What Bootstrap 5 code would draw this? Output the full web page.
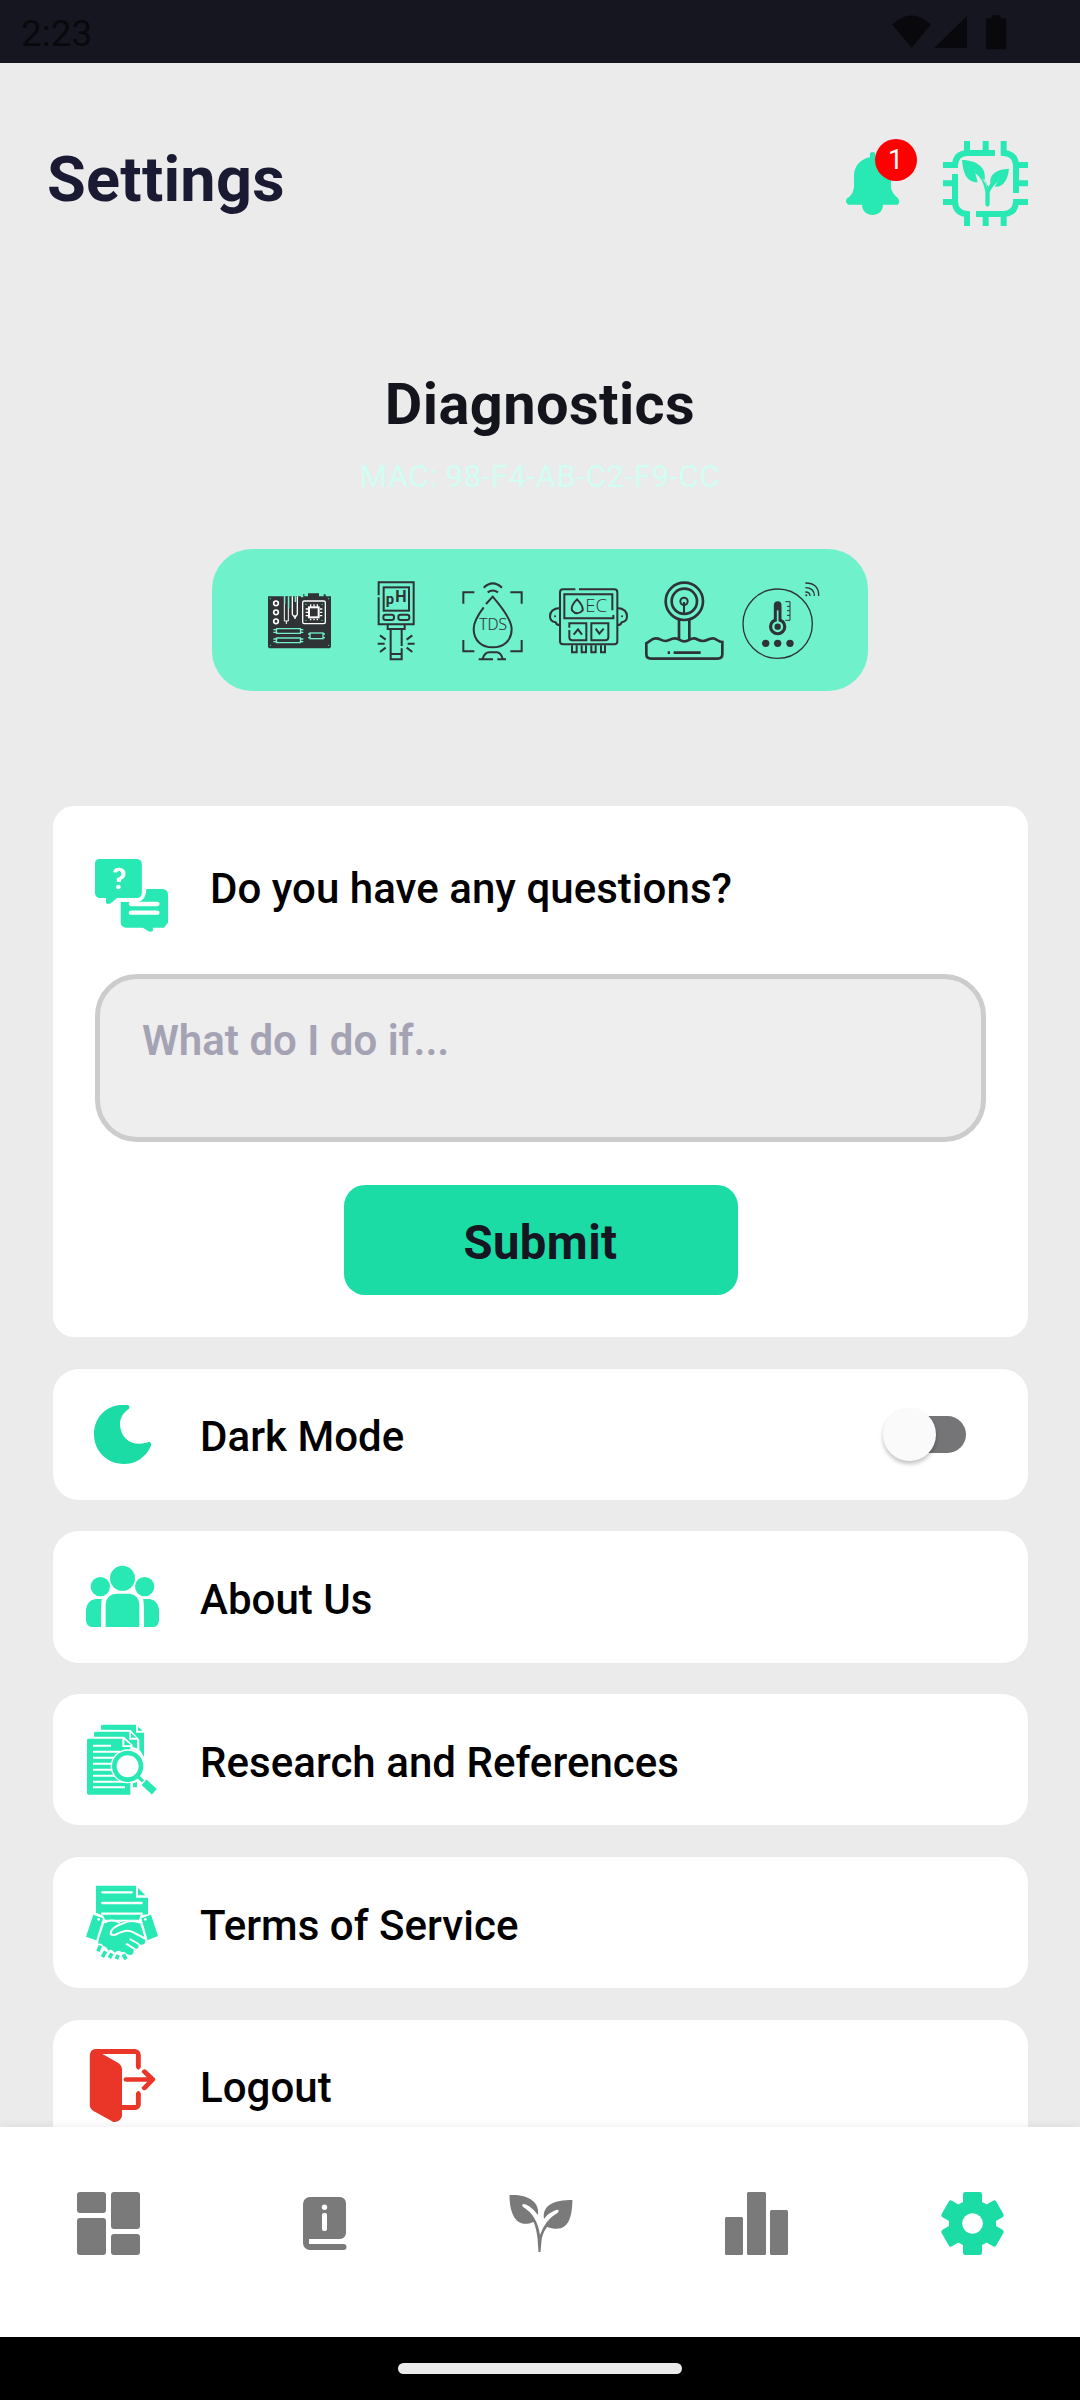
<!DOCTYPE html>
<html lang="en">
<head>
<meta charset="utf-8">
<meta name="viewport" content="width=device-width, initial-scale=1">
<title>Settings</title>
<link href="https://cdn.jsdelivr.net/npm/bootstrap@5.3.0/dist/css/bootstrap.min.css" rel="stylesheet">
<style>
  body { font-family: Roboto, sans-serif; background: #ebebeb; color: #000; height: 2400px; overflow: hidden; }
  svg { display: block; flex: none; overflow: visible; }
  .status-bar { height: 63px; background: #161620; color: #09090d; font-size: 37px; line-height: 1; padding: 3px 73px 0 21px; }
  .screen-body { flex: 1 1 0; min-height: 0; }
  .top-row { height: 85px; margin-top: 78px; padding: 0 52px 0 47px; }
  .page-title { font-size: 63px; line-height: 1; font-weight: 700; letter-spacing: .25px; color: #1a1b33; margin: 0; padding-bottom: 8px; }
  .mint { color: #28e9b4; }
  .emerald { color: #1bdca5; }
  .bell-wrap { margin-right: 44px; }
  .count-badge { left: 29px; top: -13px; width: 42px; height: 42px; background: #f00; font-size: 27px; font-weight: 400; }
  .diag-title { font-size: 57.75px; line-height: 60px; font-weight: 700; letter-spacing: .4px; color: #14151c; margin: 148px 0 22px; }
  .mac-line { font-size: 31.5px; line-height: 40px; letter-spacing: .36px; color: #d1fdf2; padding-top: 1px; margin-bottom: 52px; }
  .sensor-panel { width: 656px; height: 142px; border-radius: 40px; background: #6ff1cc; gap: 17.3px; color: #2f3335; padding-left: 1px; }
  .tile { background: #fff; border: 0; border-radius: 26px; }
  .stack { padding: 115px 52px 0 53px; gap: 31.6px; }
  .ask-tile { height: 531px; padding: 53px 42px 42px; border-radius: 21px; }
  .label { font-size: 42px; line-height: 1; font-weight: 500; letter-spacing: .04px; }
  .ask-label { padding: 0 0 14px 42px; }
  .ask-input { height: 168px; margin: 42px 0 43px; border: 5px solid #ccc; border-radius: 42px; background: #eee; color: #a5a3b3; font-size: 42px; line-height: 48px; font-weight: 600; padding: 38px 42px; resize: none; }
  .ask-input::placeholder { color: #a5a3b3; }
  .btn-submit { width: 394px; height: 110px; border: 0; border-radius: 21px; background: #1bdca5; color: #151622; font-size: 47.25px; font-weight: 700; letter-spacing: .4px; line-height: 1; padding: 7px 0 0; }
  .setting-row { height: 131.2px; padding: 0 62px 0 33px; gap: 41px; }
  .setting-row .label { padding-top: 6px; }
  .toggle-track { width: 73px; height: 37px; border-radius: 19px; background: #757577; }
  .toggle-thumb { left: -10px; top: -8px; width: 53px; height: 53px; border-radius: 50%; background: #fafafa; box-shadow: 0 3px 4px rgba(0,0,0,.24); }
  .tab-bar { height: 210px; background: #fff; color: #7a7a7a; box-shadow: 0 -1px 10px rgba(0,0,0,.07); padding-top: 65px; z-index: 2; }
  .tab-bar .nav-link { color: inherit; padding: 0; }
  .tab-bar .nav-link.active { color: #1bdca5; }
  .gesture-bar { height: 63px; background: #000; padding-top: 26px; z-index: 3; }
  .gesture-pill { width: 284px; height: 11px; border-radius: 6px; background: #ebebeb; }
</style>
</head>
<body class="d-flex flex-column">

<div class="status-bar d-flex align-items-center justify-content-between flex-shrink-0">
  <span>2:23</span>
  <svg width="115" height="35" viewBox="216 44 345 105" fill="#09090d">
    <path d="M216 69Q275 16 333 69L275 140z"/><path d="M441 43V140H343z"/>
    <path d="M515 42h26v9h12q6 0 6 6v81q0 6-6 6h-49q-6 0-6-6V57q0-6 6-6h11z"/>
  </svg>
</div>

<main class="screen-body overflow-hidden d-flex flex-column">
  <header class="top-row d-flex align-items-center justify-content-between flex-shrink-0">
    <h1 class="page-title">Settings</h1>
    <div class="d-flex align-items-center">
      <div class="bell-wrap position-relative mint">
        <svg width="53.3" height="63.3" viewBox="78 456 160 190" fill="currentColor">
          <path d="M150 472V463q0-7 8-7t8 7v9c30 5 47 27 47 55v37c3 12 10 22 20 29q10 13 0 21H189c0 41-62 41-63 0H85q-12-7-4-19c13-7 19-19 21-34V526c0-26 20-50 48-54z"/>
        </svg>
        <span class="count-badge position-absolute rounded-circle d-flex align-items-center justify-content-center text-white">1</span>
      </div>
      <svg class="mint" width="85" height="85" viewBox="369 423 255 255" fill="none" stroke="currentColor" stroke-width="18">
        <path d="M525 459H441Q407 461 405 495H369M441 423V459M497 423V459M551 423V459Q586 461 588 495V579M588 495H624M588 550H624M624 606H588Q586 640 551 642H468M551 642V678M497 642V678M441 678V642Q407 640 405 606H369M405 606V522M369 550H405"/>
        <g fill="currentColor" stroke="none">
          <path d="M426 480C462 481 501 496 494 541C506 561 499 575 505 566C515 553 526 546 537 537L524 560C548 563 564 540 567 506C526 508 508 524 511 551L505 560L496 542L466 520L473 547C438 547 429 516 426 480z"/>
          <path d="M466 519Q491 537 496 577V614Q502 626 509 614V578Q515 561 537 541L534 535Q510 551 503 568Q494 533 466 519z"/>
        </g>
      </svg>
    </div>
  </header>

  <section class="text-center flex-shrink-0">
    <h2 class="diag-title">Diagnostics</h2>
    <div class="mac-line">MAC: 98-F4-AB-C2-F9-CC</div>
    <div class="sensor-panel mx-auto d-flex align-items-center justify-content-center">
      <!-- circuit board -->
      <svg width="79" height="79" viewBox="180 122 237 237">
        <path fill="currentColor" d="M204 168H303V171H310V161H313V168H324V159H357V168H371V162H377V168H393V320L389 324H208L204 320z"/>
        <g fill="none" stroke="#fff" stroke-width="5"><circle cx="228" cy="189" r="7"/><circle cx="228" cy="216" r="7"/><circle cx="228" cy="243" r="7"/>
          <path d="M253 168V242H265V170M259 242V251" stroke-width="3"/><path d="M277 168V222L285 232L292 222V168M285 225V236" stroke-width="4"/>
          <rect x="308" y="182" width="68" height="68" rx="5" stroke-width="4"/><rect x="327" y="201" width="29" height="30" stroke-width="6"/>
          <path d="M332 192V240M342 192V240M352 192V240M317 206H367M317 216H367M317 226H367" stroke-width="4" stroke-dasharray="7 36"/></g>
        <g fill="none" stroke="#72efcb" stroke-width="4"><path d="M254 168V190M266 168V205M286 168V185" /><path d="M220 268H230V265H301V268H310M220 276H230V279H301V276H310M220 296H230V293H301V296H310M220 304H230V307H301V304H310M229 265V279M302 265V279M229 293V307M302 293V307"/><rect x="330" y="278" width="39" height="17"/><path d="M324 281H330M324 292H330M369 281H375M369 292H375"/></g>
        <g fill="#28e9b4"><circle cx="211" cy="175" r="2"/><circle cx="386" cy="175" r="2"/><circle cx="211" cy="315" r="2"/><circle cx="386" cy="315" r="2"/><circle cx="318" cy="192" r="2"/><circle cx="366" cy="192" r="2"/><circle cx="318" cy="240" r="2"/><circle cx="366" cy="240" r="2"/></g>
      </svg>
      <!-- pH probe -->
      <svg width="79" height="79" viewBox="469 122 237 237" fill="none" stroke="currentColor" stroke-width="6">
        <path d="M534 165V126H639V252H534V171"/><rect x="549" y="141" width="76" height="70"/>
        <rect x="548" y="223" width="32" height="16" rx="7"/><rect x="593" y="223" width="33" height="16" rx="7"/>
        <path d="M561 254V266H612V254M570 268V357H603V324M603 317V268M570 341H603M531 310H552M538 285L555 298M538 335L555 322M642 310H621M635 285L618 298M635 335L618 322"/>
        <g fill="currentColor" stroke="none" font-family="Roboto, sans-serif" font-weight="700"><text x="555" y="191" font-size="45" textLength="25" lengthAdjust="spacingAndGlyphs">p</text><text x="584" y="186" font-size="49" textLength="34" lengthAdjust="spacingAndGlyphs">H</text></g>
      </svg>
      <!-- TDS meter -->
      <svg width="79" height="79" viewBox="758 122 237 237" fill="none" stroke="currentColor" stroke-width="6">
        <path d="M789 190V156H822M930 156H964V190M964 299V333H930M822 333H789V299M850 142Q877 116 905 142M862 156Q877 145 893 156"/>
        <path d="M857 191L877 169Q934 235 934 266C934 302 908 321 877 321S820 302 820 266C820 245 834 222 850 201"/>
        <path d="M835 357H878M891 357H917M847 355Q853 336 867 336H889Q902 337 907 355"/>
        <text x="837" y="268" font-family="'Open Sans', sans-serif" font-weight="300" font-size="47" textLength="83" lengthAdjust="spacingAndGlyphs" fill="currentColor" stroke-width=".6">TDS</text>
      </svg>
      <!-- EC controller -->
      <svg width="79" height="79" viewBox="27 122 237 237" fill="none" stroke="currentColor" stroke-width="6">
        <path d="M106 147H69Q60 147 60 156V303Q60 312 69 312H223Q232 312 232 303V156Q232 147 223 147H117M60 203Q30 205 30 228Q30 244 47 246Q50 255 60 254M232 203Q261 205 261 228Q261 244 245 246Q242 255 232 254"/>
        <path d="M217 210V162H73V234H220V224"/><path d="M111 177Q91 197 96 210Q111 228 128 210Q130 196 111 177z"/>
        <path d="M88 262V249H139V300H97Q88 300 88 291V269M205 249V291Q205 300 196 300H154V249zM101 283L114 267L126 283M167 265L178 280L191 265M96 315V336H110V315M125 315V336H138V315M154 315V336H167V315M183 315V336H195V315"/>
        <g fill="currentColor" stroke="none"><circle cx="45" cy="228" r="3"/><circle cx="246" cy="228" r="3"/><text x="136" y="215" font-family="'Open Sans', sans-serif" font-weight="300" font-size="56" textLength="65" lengthAdjust="spacingAndGlyphs">EC</text></g>
      </svg>
      <!-- water level -->
      <svg width="79" height="79" viewBox="316 122 237 237" fill="none" stroke="currentColor" stroke-width="8">
        <circle cx="434" cy="183" r="56"/><circle cx="434" cy="183" r="38"/><circle cx="433" cy="183" r="11" stroke-width="6"/><path d="M433 185V220" stroke-width="6"/>
        <path d="M418 238V298M449 238V298M320 309V342Q320 355 334 355H534Q548 355 548 342V305C535 305 530 294 520 294C504 294 504 302 490 302C475 302 473 294 463 294C449 294 448 303 434 303C420 303 420 294 405 294C391 294 391 302 378 302C363 302 363 294 348 294C335 294 331 304 320 309z"/>
        <path d="M402 337H483M384 337H391"/>
      </svg>
      <!-- temperature -->
      <svg width="79" height="79" viewBox="605 122 237 237" fill="none" stroke="currentColor" stroke-width="4">
        <circle cx="712" cy="250" r="104"/><path d="M735 184H749V240H735M740 198H749M740 211H749M740 225H749" stroke-width="3"/>
        <path d="M712 194V244" stroke-width="23" stroke-linecap="round"/><circle cx="712" cy="259" r="26" fill="currentColor" stroke="none"/>
        <path d="M712 210V246" stroke="#6ff1cc" stroke-width="5"/><circle cx="712" cy="259" r="13" stroke="#6ff1cc" stroke-width="7"/>
        <g fill="currentColor" stroke="none"><circle cx="676" cy="309" r="11"/><circle cx="712" cy="309" r="11"/><circle cx="749" cy="309" r="11"/><circle cx="798" cy="165" r="3"/></g>
        <path d="M795 128Q836 128 835 167M795 142Q822 142 822 167M795 155Q809 155 809 167"/>
      </svg>
    </div>
  </section>

  <section class="stack d-flex flex-column">
    <form class="tile ask-tile card flex-shrink-0">
      <div class="d-flex align-items-center">
        <svg class="mint" width="73" height="73" viewBox="120 207 159 219" preserveAspectRatio="none" fill="currentColor">
          <path d="M129 207H213Q222 210 222 222V309Q221 322 213 324H168L153 341Q145 343 144 338V324H129Q120 321 120 309V220Q120 209 129 207z"/>
          <path d="M232 297H268Q279 300 279 314V398L270 413H246V423Q240 428 235 422L224 413H186Q176 409 176 398V336H213Q231 332 232 297z"/>
          <path d="M222 342H254M200 342H240M200 368H254" stroke="#fff" stroke-width="13" stroke-linecap="round"/>
          <path d="M164 247Q165 238 173 238Q182 240 182 251Q182 262 172 267V276" fill="none" stroke="#fff" stroke-width="9"/><ellipse cx="171" cy="291" rx="5" ry="7" fill="#fff"/>
        </svg>
        <label class="label ask-label" for="question">Do you have any questions?</label>
      </div>
      <textarea id="question" class="ask-input w-100 d-block overflow-hidden" placeholder="What do I do if..."></textarea>
      <button type="button" class="btn btn-submit mx-auto">Submit</button>
    </form>

    <div class="tile setting-row d-flex align-items-center flex-shrink-0">
      <svg class="emerald" width="73" height="73" viewBox="138 144 219 219" fill="currentColor"><path d="M239 165H263Q271 168 267 176C247 190 239 206 240 227C244 268 279 292 326 276Q335 275 333 287C317 323 286 342 251 342C202 342 162 304 162 253C162 205 195 170 239 165z"/></svg>
      <span class="label">Dark Mode</span>
      <div class="toggle-track position-relative ms-auto"><div class="toggle-thumb position-absolute"></div></div>
    </div>

    <div class="tile setting-row d-flex align-items-center flex-shrink-0">
      <svg class="mint" width="73" height="73" viewBox="138 630 219 219" fill="currentColor">
        <circle cx="247.500" cy="685" r="37.500"/><circle cx="181" cy="710" r="29"/><circle cx="314" cy="710" r="29"/>
        <path d="M197 831V762Q200 732 230 731H268Q295 734 298 762V831zM167 747H186Q182 755 183 831H155Q140 829 138 812V778Q142 750 167 747zM328 747H309Q313 755 312 831H341Q355 829 357 812V778Q353 750 328 747z"/>
      </svg>
      <span class="label">About Us</span>
    </div>

    <div class="tile setting-row d-flex align-items-center flex-shrink-0">
      <svg class="mint" width="73" height="73" viewBox="138 130 219 219" fill="currentColor">
        <path d="M183 150V139Q184 135 188 135H288V159H312V232Q302 214 298 210V180L272 151zM294 141L308 153H294zM162 171V160Q163 156 167 156H268V180H291V206L278 202V196L252 171zM273 159L288 174H273zM145 177H247V202H271V345H145Q141 344 141 340V181Q142 177 145 177zM253 180L273 197H253z"/>
        <path d="M159 198H213M159 216H240M159 234H240M159 252H240M159 270H240M159 288H240M159 306H255M159 323H255" stroke="#fff" stroke-width="6"/>
        <circle cx="263" cy="260" r="51" fill="#fff"/><circle cx="263" cy="260" r="40" fill="#fff" stroke="currentColor" stroke-width="14"/>
        <path d="M292 288L309 305" stroke="currentColor" stroke-width="10"/><path d="M312 308L343 336" stroke="currentColor" stroke-width="22"/><path d="M279 311L291 307V323H279z"/>
      </svg>
      <span class="label">Research and References</span>
    </div>

    <div class="tile setting-row d-flex align-items-center flex-shrink-0">
      <svg class="mint" width="73" height="73" viewBox="138 619 219 219" fill="currentColor">
        <path d="M168 618H288V654H324V704L302 706L297 720H195L190 708L168 699zM294 625L316 647H294z"/>
        <path d="M187 638H275M187 670H305M187 702H305" stroke="#fff" stroke-width="7" stroke-linecap="round"/>
        <path d="M160 705L189 716L169 782L138 771zM333 705L354 769L323 782L304 716z"/>
        <circle cx="176" cy="719" r="4" fill="#fff"/><circle cx="316" cy="719" r="4" fill="#fff"/>
        <path d="M194 726Q210 719 243 727Q270 718 299 726L316 780L315 790Q309 799 294 792L296 803Q291 812 279 802L281 816Q278 830 262 824Q251 812 246 818Q235 808 224 819Q214 805 206 813Q196 798 190 800Q187 790 174 792L178 773z"/>
        <path d="M193 729Q217 716 240 730M300 729Q274 718 249 731C225 739 211 751 212 763C223 774 233 758 248 756Q264 750 280 758L318 778M269 778L296 793M258 792L281 806" fill="none" stroke="#fff" stroke-width="6"/>
        <path d="M181 798L174 815M197 815L187 832M216 821L208 835M235 826L229 838M250 824L258 839" stroke="currentColor" stroke-width="11" fill="none"/>
      </svg>
      <span class="label">Terms of Service</span>
    </div>

    <div class="tile setting-row d-flex align-items-center flex-shrink-0">
      <svg width="73" height="73" viewBox="112.700 147 178.900 219" preserveAspectRatio="none" fill="#e93628">
        <path d="M122 165Q124 147 136 147H233Q246 150 247 165V202Q241 216 235 202V162H153L193 190Q201 198 201 210V315H235V280Q241 266 247 280V315Q245 327 235 330H201V349Q195 368 180 366L131 333Q122 326 122 316z"/>
        <path d="M211 238.500H274M256 215L276 238.500L256 264" fill="none" stroke="#e93628" stroke-width="13" stroke-linecap="round" stroke-linejoin="round"/>
      </svg>
      <span class="label">Logout</span>
    </div>
  </section>
</main>

<nav class="tab-bar nav nav-justified align-items-start flex-shrink-0 position-relative">
  <a class="nav-link" aria-label="Dashboard"><svg class="mx-auto" width="63" height="63" fill="currentColor"><rect width="29" height="21" rx="3"/><rect x="34" width="29" height="37" rx="3"/><rect y="26" width="29" height="37" rx="3"/><rect x="34" y="42" width="29" height="21" rx="3"/></svg></a>
  <a class="nav-link" aria-label="Guide"><svg class="mx-auto" width="63" height="63" fill="currentColor"><path d="M17 5h30a6 6 0 0 1 6 6v30a6 6 0 0 1-6 6H16v5h34.500a3 3 0 0 1 0 6H17a7 7 0 0 1-7-7V12a7 7 0 0 1 7-7z"/><ellipse cx="31.500" cy="15.300" rx="2.700" ry="2.700" fill="#fff"/><rect x="29" y="21" width="5" height="18" rx="2" fill="#fff"/></svg></a>
  <a class="nav-link" aria-label="Plants"><svg class="mx-auto" width="63" height="63" fill="currentColor"><path d="M.5 3C18 2 31 9 29 23C25 18 20 13 15 12Q12 12 14 15Q28 23 31 43Q36 28 49 20.500Q51 17 47 18Q39 21 35 27C33 13 45 8 63.400 8C63 27 59 42 38 35Q33 42 32.500 49L31.500 60H29.500L28.500 46Q27 35 24.500 30C8 37 .5 23 .5 3z"/></svg></a>
  <a class="nav-link" aria-label="Statistics"><svg class="mx-auto" width="63" height="63" fill="currentColor"><rect y="25" width="18" height="38" rx="1.500"/><rect x="22" width="19" height="63" rx="1.500"/><rect x="45" y="18" width="18" height="45" rx="1.500"/></svg></a>
  <a class="nav-link active" aria-label="Settings"><svg class="mx-auto" width="63" height="63" viewBox="903 576 189 189" fill="currentColor"><circle cx="997.500" cy="670.500" r="71"/><rect x="969" y="576" width="57" height="189" rx="7"/><rect x="969" y="576" width="57" height="189" rx="7" transform="rotate(60 997.500 670.500)"/><rect x="969" y="576" width="57" height="189" rx="7" transform="rotate(120 997.500 670.500)"/><circle cx="997.500" cy="670.500" r="31" fill="#fff"/></svg></a>
</nav>
<div class="gesture-bar flex-shrink-0 position-relative"><div class="gesture-pill mx-auto"></div></div>

<script src="https://cdn.jsdelivr.net/npm/bootstrap@5.3.0/dist/js/bootstrap.bundle.min.js"></script>
</body>
</html>
